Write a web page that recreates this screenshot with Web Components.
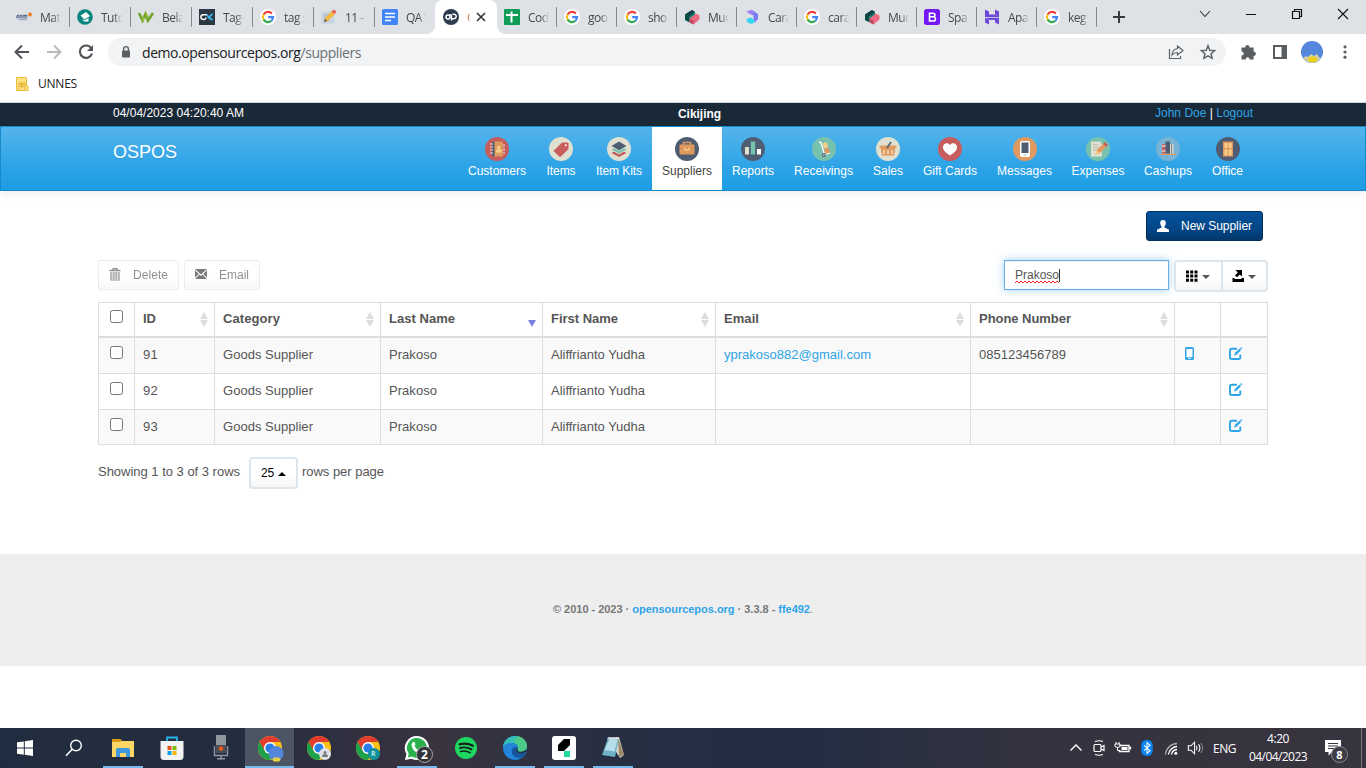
<!DOCTYPE html>
<html lang="en"><head><meta charset="utf-8"><title>OSPOS | Suppliers</title>
<style>
body{margin:0;width:1366px;height:768px;overflow:hidden;font-family:"Liberation Sans",Arial,sans-serif;background:#fff}
</style></head><body>
<pos-desktop></pos-desktop>
<script>
const google='<circle cx="8" cy="8" r="8" fill="#fff"/><g fill="none" stroke-width="2.2"><path d="M11.9 4.6A5.1 5.1 0 0 0 3.6 5.5" stroke="#ea4335"/><path d="M3.6 5.5A5.1 5.1 0 0 0 3.6 10.6" stroke="#fbbc05"/><path d="M3.6 10.6A5.1 5.1 0 0 0 11.4 11.8" stroke="#34a853"/><path d="M11.4 11.8A5 5 0 0 0 13.1 8.1H8.2" stroke="#4285f4"/></g>';
const mud='<path d="M1 5.500L8 1l3 2v5l-6 5-4-2z" fill="#0c8273"/><path d="M1 5.500l4 2V13l-4-2z" fill="#064c45"/><path d="M1 5.500L8 1l3 2-6 4.500z" fill="#123f43"/><path d="M5.500 9.500L12 4.500l3.500 2v4l-6 5-4-2z" fill="#ee6a82"/><path d="M5.500 9.500l4 2v4l-4-2z" fill="#b84d66"/>';
const chrome=extra=>'<circle cx="12" cy="12" r="12" fill="#fbc116"/><path d="M12 6h10.4a12 12 0 0 0-20.8 0L6.8 15z" fill="#e33b2e"/><path d="M1.6 6A12 12 0 0 0 12 24l5.2-9-5.2 3-5.2-3z" fill="#1fa04b"/><circle cx="12" cy="12" r="6" fill="#fff"/><circle cx="12" cy="12" r="4.6" fill="#2b7de9"/>'+extra;
const disc=(c,x)=>'<circle cx="12" cy="12" r="12" fill="'+c+'"/>'+x;
const ICONS={
 materi:[16,'<path d="M0 6h12v4H0z" fill="#56688c" opacity=".25"/><path d="M0 8h11M1 6.400h2m1 0h2m1 0h4" stroke="#40517c" stroke-width="1.100" opacity=".8"/><path d="M3 10.700h8" stroke="#8b9bb8"/><circle cx="14" cy="5.500" r="1.900" fill="#f47b20"/>'],
 tuto:[16,'<circle cx="8" cy="8" r="7.800" fill="#08857c"/><path d="M3.500 6.500L9 3l4 4-5.500 3.500z" fill="#fff"/><path d="M5 9.500l2.500 2 4-2.500v3.500H7z" fill="#fff"/>'],
 bela:[16,'<path d="M1 4l3.500 7.500 3-6.500 2.500 6.500L15 4" fill="none" stroke="#75a42a" stroke-width="2.700"/><path d="M8 4l2 4M4 12l2-4" stroke="#9cc63d" stroke-width="1.600"/>'],
 tagg:[16,'<path d="M0 0h16v16H0z" fill="#2b3844"/><path d="M8 5.800H4.200a2.300 2.300 0 0 0 0 4.600h1a1.700 1.700 0 0 0 1.700-1.900" fill="none" stroke="#fff" stroke-width="1.500"/><path d="M13.500 5L10 8.200l3.500 3M8 5.800l3 4.600" fill="none" stroke="#3ab4e8" stroke-width="1.700"/>'],
 google:[16,google],
 memo:[16,'<path d="M0 3l12-1 2 12-13 1z" fill="#c5d4df"/><path d="M3 6h7M3 8h6" stroke="#9fb1bf"/><path d="M3 13l1-4 7-7 3 3-7 7z" fill="#f3b83c"/><path d="M10.500 2.500L13 .5 15.500 3l-2 2z" fill="#e85e5e"/><path d="M3 13l1-3.500L6 12z" fill="#575149"/>'],
 doc:[16,'<rect width="16" height="16" rx="1.500" fill="#4285f4"/><path d="M3 4.500h10M3 8h10M3 11.500h6" stroke="#fff" stroke-width="1.700"/>'],
 op:[16,'<circle cx="8" cy="8" r="8" fill="#2c3c50"/><circle cx="5" cy="8" r="2" fill="none" stroke="#fff" stroke-width="1.500"/><path d="M6.500 6.200Q8.500 5 8.500 7v4.500M8.500 9.800h1.800c3.800 0 3.800-4.500.7-4.500H9.500" fill="none" stroke="#fff" stroke-width="1.400"/>'],
 sheet:[16,'<rect width="16" height="16" rx="1" fill="#0f9d58"/><path d="M2 6h12M7.500 2.500v11" stroke="#fff" stroke-width="2"/>'],
 mud:[16,mud],
 cara:[16,'<path d="M2.500 2.500L8 1l6 4v5l-3 3.500L9.500 10V6.500L6.500 5z" fill="#7c7df0"/><path d="M2.500 2.500L8 1l3 2-4.500 2.500z" fill="#a284f4"/><path d="M2.500 10l4-1.500 3 1.500 1.500 3.500-4 1.500-4-2z" fill="#36d5ee"/>'],
 boot:[16,'<rect width="16" height="16" rx="2.500" fill="#7516f5"/><path d="M5.500 4.200h3.300c2.900 0 2.900 3.600 0 3.600H5.500zM5.500 7.800h3.700c3 0 3 4.200-.1 4.200H5.500z" fill="none" stroke="#fff" stroke-width="1.600"/>'],
 host:[16,'<path d="M1 .5l4 2V5.500h5.500L15 8H1zM11 .5l4 2V8l-4-2.500zM15 15.500l-4-2V11H5.500L1 8.800h14zM1 9l4 2v4.500l-4-2z" fill="#6b48d8"/>'],
 back:[16,'<path d="M15 8H2M8 1.500L1.500 8 8 14.500" fill="none" stroke="#50545a" stroke-width="2"/>'],
 fwd:[16,'<path d="M1 8h13M8 1.500L14.500 8 8 14.500" fill="none" stroke="#b7b9bc" stroke-width="1.900"/>'],
 reload:[16,'<path d="M13.400 4.500A6.200 6.200 0 1 0 14 9.500" fill="none" stroke="#50545a" stroke-width="2.100"/><path d="M15 1v6H9z" fill="#50545a"/>'],
 lock:[12,'<rect x="2" y="4.500" width="8" height="7" rx="1" fill="#5a5e63"/><path d="M3.600 5V3a2.400 2.400 0 0 1 4.800 0v2" fill="none" stroke="#5a5e63" stroke-width="1.400"/>'],
 share:[16,'<path d="M1.500 5v9.500h11V12" fill="none" stroke="#5f6368" stroke-width="1.200"/><path d="M9.500 2l5.500 4.500L9.500 11V8.500C7 8.500 5.500 9 4 11c.3-3.500 2.500-6 5.500-6.500z" fill="none" stroke="#5f6368" stroke-width="1.200"/>'],
 star:[16,'<path d="M8 1.800l1.800 4.400 4.800.4-3.600 3.100 1.100 4.600L8 11.900l-4.100 2.400L5 9.700 1.400 6.600l4.800-.4z" fill="none" stroke="#5f6368" stroke-width="1.500"/>'],
 puzzle:[16,'<path d="M1.500 3.500h3.700c0-3.300 4.400-3.300 4.400 0h4v4c3 0 3 4.500 0 4.500v3.500h-4c0-3-3.900-3-3.900 0H1.500v-4c3 0 3-4 0-4z" fill="#5a5e63"/>'],
 panel:[16,'<path d="M1 1h14v14H1zM3 3v10h6.500V3z" fill="#5a5e63" fill-rule="evenodd"/>'],
 avatar:[22,'<circle cx="11" cy="11" r="11" fill="#5487dc"/><path d="M2 17l3-2 2 1 3-3 3 2 3-2 2 3 2 1a11 11 0 0 1-18 0z" fill="#d2cfa4"/><ellipse cx="11.500" cy="18.500" rx="4.500" ry="3" fill="#efd118"/>'],
 dots:[16,'<g fill="#5a5e63"><circle cx="8" cy="2.800" r="1.600"/><circle cx="8" cy="8" r="1.600"/><circle cx="8" cy="13.200" r="1.600"/></g>'],
 plus:[14,'<path d="M7 1v12M1 7h12" stroke="#36393d" stroke-width="2"/>'],
 x:[10,'<path d="M1 1l8 8M9 1L1 9" stroke="#333" stroke-width="1.600"/>'],
 wx:[12,'<path d="M1 1l10 10M11 1L1 11" stroke="#111" stroke-width="1.100"/>'],
 wmax:[12,'<path d="M1.500 3.500h7v7h-7zM3.500 3.500v-2h7v7h-2" fill="none" stroke="#111" stroke-width="1.200"/>'],
 wmin:[12,'<path d="M1 6.500h10" stroke="#111"/>'],
 wdown:[12,'<path d="M1 3l5 5.500L11 3" fill="none" stroke="#333" stroke-width="1.100"/>'],
 folder:[14,'<path d="M1.500.5h10v8.500h1.500v4.500H1.500z" fill="#ffe284" stroke="#e9bf39"/><path d="M4 13V6h6v7" fill="none" stroke="#e0b22f"/><path d="M5 7.500h4M5 9.500h4M7 6v5" stroke="#e0b22f"/>'],
 customers:[24,disc('#c75c5c','<rect x="7" y="4.500" width="11" height="15" rx="1.200" fill="#e0995e"/><path d="M7 4.500h2.500v15H7z" fill="#4f5d73"/><path d="M5 7h3M5 10h3M5 13h3M5 16h3" stroke="#e0e0d1" stroke-width="1.200"/><path d="M19 7v10" stroke="#e0e0d1" stroke-dasharray="3 1"/><circle cx="13.800" cy="10.500" r="1.700" fill="#f5cf87"/><path d="M11 15.500v-1.500q0-2 2.800-2t2.800 2v1.500z" fill="#f5cf87"/>')],
 items:[24,disc('#e0e0d1','<path d="M4.500 14L13 5.500h5.500l1 1V12L11 20.200z" fill="#c75c5c"/><circle cx="16.800" cy="8.200" r="1" fill="#fff"/>')],
 kits:[24,disc('#e0e0d1','<path d="M4.500 16L12 12l7.500 4-7.500 4z" fill="#c75c5c"/><path d="M4.500 13L12 9l7.500 4-7.500 4.500z" fill="#e0e0d1"/><path d="M4.500 12.500L12 9l7.500 3.500-7.500 4z" fill="#76c2af"/><path d="M4.500 10L12 6l7.500 4-7.500 4z" fill="#e0e0d1"/><path d="M4.500 9L12 4.500 19.500 9 12 13.300z" fill="#4f5d73"/>')],
 suppliers:[24,disc('#4f5d73','<path d="M8.500 8V5.500h7V8" fill="none" stroke="#e0995e" stroke-width="1.500"/><rect x="4.500" y="7.500" width="15" height="10" rx="1" fill="#e0995e"/><path d="M4.500 11.500h15" stroke="#c9854e" stroke-width=".8"/><path d="M9.500 10.500q0 2.500 2.500 2.500t2.500-2.500" fill="none" stroke="#f5cf87" stroke-width="1.400"/>')],
 reports:[24,disc('#4f5d73','<rect x="4" y="10" width="4" height="7.500" fill="#e0e0d1"/><rect x="9.800" y="4.500" width="4.400" height="13" fill="#76c2af"/><rect x="16" y="12" width="4" height="5.500" fill="#fff"/>')],
 receivings:[24,disc('#76c2af','<path d="M7 5l2 .5 3.500 12" fill="none" stroke="#fff" stroke-width="1.400"/><path d="M10.500 6.500l4-1.500 1.800 5-4 1.500z" fill="#f5cf87"/><path d="M11.800 12.200l4.700-1.500 1.700 4.800-4.500 1.500z" fill="#e0995e"/><path d="M12 18l6-2" stroke="#fff"/><circle cx="11.800" cy="18" r="1.900" fill="#4f5d73"/><circle cx="11.800" cy="18" r=".7" fill="#fff"/>')],
 sales:[24,disc('#e0e0d1','<path d="M3.500 8.500h17v2h-1l-1.500 8H6l-1.500-8h-1z" fill="#e0995e"/><path d="M8 13v4M12 13v4M16 13v4" stroke="#f4dfb8" stroke-width="1.600"/><path d="M11 11l4-6" stroke="#4f5d73" stroke-width="1.600"/>')],
 gift:[24,disc('#c75c5c','<path d="M12 18.500C7 15.500 5 13 5 10.300c0-4.300 5.300-5.300 7-2 1.700-3.300 7-2.300 7 2 0 2.700-2 5.200-7 8.200z" fill="#fff"/>')],
 messages:[24,disc('#e0995e','<rect x="7" y="4" width="10" height="16" rx="1.500" fill="#fff"/><path d="M8.500 5.500h7V16h-7z" fill="#4f5d73"/><path d="M10.500 18h3" stroke="#bbb"/>')],
 expenses:[24,disc('#76c2af','<path d="M5 4.500h10l1 3v12H5z" fill="#e0e0d1"/><path d="M7 8h6M7 10.500h5M7 13h3" stroke="#b9b9a9"/><path d="M9.500 17.500l1-4.500L17.500 6.500l3 3-7 7z" fill="#e0995e"/><path d="M17 7l2-2 3 3-2 2z" fill="#c75c5c"/><path d="M9.500 17.500l1-4.500 3.200 3z" fill="#f5cf87"/>')],
 cashups:[24,disc('#77b3d4','<path d="M5 16.500h14.500v1.500H5z" fill="#e0995e"/><path d="M6 7h3.500v9.500H6z" fill="#c75c5c"/><path d="M9.500 4.500H14v12H9.500z" fill="#4f5d73"/><path d="M14 7h3.500v9.500H14z" fill="#e0e0d1"/><path d="M6 9h3.500M6 14h3.500" stroke="#fff"/><path d="M15.700 7v9.500" stroke="#4f5d73" stroke-width=".8"/>')],
 office:[24,disc('#4f5d73','<rect x="7" y="4.500" width="10" height="15" fill="#e0995e"/><path d="M8.500 6h3v5h-3zm4.200 0h3v5h-3zm-4.200 6.500h3v6h-3zm4.200 0h3v6h-3z" fill="#f5cf87"/>')],
 user:[12,'<path d="M6 0c2 0 2.800 1.300 2.800 3 0 1.400-.6 2.600-1.300 3.300v1.200L12 9.800V12H0V9.800l4.500-2.300V6.300C3.800 5.600 3.200 4.400 3.200 3 3.200 1.300 4 0 6 0z" fill="#fff"/>'],
 trash:[12,'<path d="M.5 2.500h11M4 2V.7h4V2" fill="none" stroke="#555" stroke-width="1.300"/><path d="M2 4v8h8V4" fill="none" stroke="#555" stroke-width="1.200"/><path d="M4.200 4v7M6 4v7M7.800 4v7" stroke="#555"/>'],
 envelope:[12,'<path d="M0 1h12L6 6.500zM0 2.300L3.800 5.900 0 9.500zM12 2.300L8.200 5.900 12 9.500zM4.500 6.600L6 8 7.500 6.600 12 11H0z" fill="#333"/>'],
 th:[12,'<path d="M0 .5h3v3H0zm4.200 0h3v3h-3zm4.300 0h3v3h-3zM0 4.600h3v3H0zm4.200 0h3v3h-3zm4.300 0h3v3h-3zM0 8.700h3v3H0zm4.200 0h3v3h-3zm4.300 0h3v3h-3z" fill="#000"/>'],
 exp:[12,'<path d="M3.500 0H10v6.500L7.800 4.500 5 7.300 3 5.500 5.800 2.500zM.5 8h2v1h7V8H12v4H.5z" fill="#000"/>'],
 phone:[13,'<rect x="2" y="0" width="9" height="13" rx="1.600" fill="#2fa4e7"/><path d="M3.500 2h6v8.200h-6zM5 11.200h3v.9H5z" fill="#fff"/>'],
 edit:[13,'<path d="M8 1.700H2.800Q1 1.700 1 3.500v6.700Q1 12 2.800 12h6.700q1.800 0 1.800-1.800V7.500" fill="none" stroke="#2fa4e7" stroke-width="1.900"/><path d="M5 8.500l1-2.700L10.500 1.500l1.700 1.600L7.500 7.700z" fill="#2fa4e7"/><path d="M11 1l1.200-.9L13.300 1.200l-.9 1z" fill="#2fa4e7"/>'],
 win:[16,'<path d="M0 2.300l6.800-.9v6.200H0zM7.800 1.200L16 0v7.600H7.800zM0 8.500h6.800v6.200L0 13.800zM7.800 8.500H16V16l-8.200-1.200z" fill="#fff"/>'],
 search:[18,'<circle cx="11" cy="6.500" r="5.300" fill="none" stroke="#fff" stroke-width="1.400"/><path d="M7.200 10.300L1 16.700" stroke="#fff" stroke-width="1.600"/>'],
 explorer:[24,'<path d="M1 3h8l2 2h12v16H1z" fill="#ffd766"/><path d="M1 3h9v3H1z" fill="#d89b12"/><path d="M5 21v-7q0-2 2-2h10q2 0 2 2v7h-4v-4H9v4z" fill="#3e97e0"/>'],
 store:[24,'<path d="M7 7V1.500h10V7" fill="none" stroke="#27b2ea" stroke-width="1.800"/><path d="M.5 5h23v15.500q0 3.500-3.500 3.500H4Q.5 24 .5 20.500z" fill="#f3f3f3"/><path d="M7.500 10h4v4h-4z" fill="#e8501f"/><path d="M12.500 10h4v4h-4z" fill="#7cb90a"/><path d="M7.500 15h4v4h-4z" fill="#0aa0e6"/><path d="M12.500 15h4v4h-4z" fill="#f5b60a"/>'],
 mic:[24,'<rect x="7" y="-1" width="10" height="18" fill="#8f979e"/><path d="M7 9h10v8H7z" fill="#4b4e52"/><circle cx="12" cy="12.500" r="2.200" fill="#f05a1a"/><path d="M5.500 10v9.500h13V10M12 19.500V23M8 22.800h8" fill="none" stroke="#8f979e" stroke-width="1.400"/>'],
 chromeA:[24,chrome('<circle cx="18" cy="17.500" r="7.500" fill="#5487dc"/><ellipse cx="18.500" cy="23.500" rx="4" ry="2.200" fill="#e4cf45"/>')],
 chromeB:[24,chrome('<circle cx="18" cy="18" r="6" fill="#dfe3e7"/><circle cx="18" cy="16.500" r="1.500" fill="#737a80"/><path d="M15 21q0-3 3-3t3 3z" fill="#737a80"/>')],
 chromeC:[24,chrome('<circle cx="18" cy="18" r="6" fill="#10909b"/>')],
 whatsapp:[24,'<path d="M12 0a12 12 0 0 1 0 24q-3 0-5.500-1.300L0 24l1.400-6A12 12 0 0 1 12 0z" fill="#fff"/><path d="M12 2a10 10 0 0 1 0 20q-3 0-5.200-1.400L2.800 21.500l1-3.800A10 10 0 0 1 12 2z" fill="#29b14c"/><path d="M7.500 6.500q1.500-1.500 2.300.3l.7 1.700-1 1.500q1.500 3 4.500 4.200l1.200-1.500 2.700 1.300q.3 3-3 3.300Q7.500 16 6.500 9q0-1.500 1-2.500z" fill="#fff"/>'],
 spotify:[24,'<circle cx="12" cy="12" r="11" fill="#1ed760"/><g fill="none" stroke="#17241d" stroke-linecap="round"><path d="M5.500 8.300q7-2 13.500 1.500" stroke-width="2.200"/><path d="M6 12q6-1.700 11.500 1.400" stroke-width="1.900"/><path d="M6.500 15.500q5-1.300 9.700 1.200" stroke-width="1.600"/></g>'],
 edge:[24,'<circle cx="12" cy="12" r="12" fill="#1571c9"/><path d="M0 12C0 5 5.500 0 12 0s12 4.500 12 10c0 4-3 6-6 6-4 0-5-1.500-3.500-3C16 10 13 7 9 7 4 7 0 10 0 12z" fill="#35c1b8"/><path d="M14 0c6 1 10 5 10 10 0 4-3 6-6 6-4 0-5-1.500-3.500-3 2-3-.5-6-4-6z" fill="#58cf70" opacity=".65"/><path d="M.2 12C1 8 5 6.500 9 7c3 .5 5 2 5.500 4-1.500-1.500-6-1-6 3.500 0 4 3.500 8 8.500 8A12 12 0 0 1 .2 12z" fill="#2386db"/><path d="M14.500 13q-2 3 3.500 3 3 0 5-2l-1.500 5q-3 3-7.500 2.500-5-1-5-5.500 0-4 4.500-5 1.500.5 1 2z" fill="#17569c"/><path d="M14.500 13q-2 3.500 3.500 3.500 3 0 5.600-2.500" fill="none" stroke="#252c3e" stroke-width="1.400"/>'],
 pen:[24,'<rect width="24" height="24" rx="3" fill="#fff"/><path d="M6 15V9l6-6h6v6l-6 6z" fill="#000"/><path d="M12 15h6v6h-6z" fill="#1fdb9c"/>'],
 notepad:[24,'<path d="M6 2l12-1 5 18-4 3z" fill="#d9d7d0"/><path d="M17 1l6 18-5 2z" fill="#9b8a69"/><path d="M7 2l11 0-4 19-13-2z" fill="#6fb2c8"/><path d="M8.500 3l8 .5-3 12-10-1.500z" fill="#b5dfe9"/><path d="M7 2l11 .5" stroke="#e6e6e6" stroke-width="1.600"/>'],
 up:[14,'<path d="M1.500 9.500L7 4l5.500 5.500" fill="none" stroke="#fff" stroke-width="1.400"/>'],
 meet:[16,'<rect x="3" y="4.500" width="7" height="7" rx="1" fill="none" stroke="#fff" stroke-width="1.200"/><path d="M10 7l3-1.500v5L10 9" fill="none" stroke="#fff" stroke-width="1.200"/><path d="M4 1.500q4-1.500 8 0M4 14.500q4 1.500 8 0" fill="none" stroke="#fff" stroke-width="1.200"/>'],
 battery:[16,'<path d="M4.500 5.500H14v6H4.500V10M14.500 7.500h1v2" fill="none" stroke="#fff" stroke-width="1.300"/><path d="M6.500 7h6v3h-6z" fill="#fff"/><path d="M0 4h5v2.500q-2.500 2-5 0zM1 2v2M4 2v2M2.500 7v3.500h2" stroke="#fff" fill="none"/>'],
 bt:[16,'<rect x="2.300" y="0" width="11.400" height="16" rx="5" fill="#0a84f2"/><path d="M5 5.300l6 5.400-3 2.600V2.700l3 2.600-6 5.400" fill="none" stroke="#fff" stroke-width="1.100"/>'],
 wifi:[16,'<g fill="none" stroke="#fff" stroke-width="1.300"><path d="M2.500 14.500A12 12 0 0 1 14 3.500" opacity=".6"/><path d="M5.500 14.500A9 9 0 0 1 14 6.500"/><path d="M8.500 14.500A6 6 0 0 1 14 9.500"/></g><circle cx="12.800" cy="13.300" r="1.500" fill="#fff"/>'],
 sound:[18,'<path d="M1.500 6.500h3l4-4v13l-4-4h-3z" fill="none" stroke="#fff" stroke-width="1.200"/><path d="M10.500 6.500q1.700 2.500 0 5M13 4.800q3 4.200 0 8.400" fill="none" stroke="#fff" stroke-width="1.200"/><path d="M15.500 3.300q4 5.700 0 11.400" fill="none" stroke="#fff" opacity=".45"/>'],
 notif:[18,'<path d="M1 1h16v12H8l-3.500 3.500V13H1z" fill="#fff"/><path d="M4 4.500h10M4 7h10M4 9.500h7" stroke="#35333f" stroke-width="1.100"/>']
};
const T=(s,w)=>`<fit-text w="${w}">${s}</fit-text>`;
const I=(n,s)=>`<ui-icon name="${n}" size="${s||''}"></ui-icon>`;
const SEG='font-family:"Open Sans","Noto Sans",sans-serif;';
function define(name,view){
  customElements.define(name,class extends HTMLElement{
    connectedCallback(){
      if(this.shadowRoot)return;
      this.attachShadow({mode:'open'}).innerHTML=view(n=>this.getAttribute(n)||'',this);
    }
  });
}
define('pos-desktop',()=>`<style>:host{display:flex;flex-direction:column;width:1366px;height:768px;overflow:hidden}</style>
<browser-tabs></browser-tabs><browser-toolbar></browser-toolbar><pos-page></pos-page><task-bar></task-bar>`);

const tabs=[['materi','Mat'],['tuto','Tuto'],['bela','Bela'],['tagg','Tag-'],['google','tag s'],['memo','11 - '],['doc','QA V'],['op','O'],['sheet','Cod'],['google','goo'],['google','sho'],['mud','Muc'],['cara','Cara'],['google','cara'],['mud','Muc'],['boot','Spa'],['host','Apa'],['google','keg']];
define('browser-tabs',()=>`<style>:host{display:flex;height:34px;background:#dee1e6;padding-left:8px;box-sizing:border-box;flex:none}
.plus{display:flex;align-items:center;padding-left:15px;flex:1}.win{display:flex;align-items:center;height:28px;gap:34px;padding-right:17px}</style>
${tabs.map((t,i)=>`<browser-tab icon="${t[0]}" w="${i<7?61:i==7?62:60}" ${i<7?'wide':''} ${i==7?'active':''} ${i==6?'last':''}>${t[1]}</browser-tab>`).join('')}
<div class="plus">${I('plus',14)}</div><div class="win">${I('wdown',12)+I('wmin',12)+I('wmax',12)+I('wx',12)}</div>`);
define('browser-tab',a=>`<style>:host{display:flex;align-items:center;position:relative;width:${a('w')}px;box-sizing:border-box;padding-left:7px;height:34px;flex:none;${SEG}font-size:12px;color:#45494d}
:host([wide]),:host([active]){padding-left:8px}
.t{margin-left:8px;width:21px;overflow:hidden;white-space:nowrap;letter-spacing:-.5px;-webkit-mask-image:linear-gradient(90deg,#000 60%,transparent)}
:host::after{content:"";position:absolute;right:0;top:7px;height:20px;width:1px;background:#85888c}
:host([wide])::after{right:-1px}
:host([last])::after,:host([active])::after{display:none}
:host([active]){background:#fff;border-radius:8px 8px 0 0}
:host([active])::before{content:"";position:absolute;left:-8px;right:-8px;bottom:0;height:8px;background:radial-gradient(circle at 0 0,transparent 7.500px,#fff 8px) left/8px 8px no-repeat,radial-gradient(circle at 100% 0,transparent 7.500px,#fff 8px) right/8px 8px no-repeat}
:host([active]) .t{width:3px;color:#c77a4a}.c{margin-left:6px;display:flex}</style>
${I(a('icon'),16)}<div class="t"><slot></slot></div>${a('icon')=='op'?`<div class="c">${I('x',10)}</div>`:''}`);

define('browser-toolbar',()=>`<style>:host{display:block;height:69px;background:#fff;flex:none;${SEG}color:#202124;border-bottom:1px solid #d4d8dc;box-sizing:border-box}
.r{display:flex;height:36px;align-items:center;padding-left:14px}.n{display:flex;gap:16px;width:94px;flex:none}
.o{display:flex;align-items:center;width:1118px;flex:none;height:28px;border-radius:14px;background:#f1f3f4;box-sizing:border-box;padding:0 10px 0 12px;font-size:14px}
.u{margin-left:10px;flex:1}.u i{font-style:normal;color:#6b6f74}.s{display:flex;gap:16px}.e{display:flex;align-items:center;gap:16px;padding-left:14px;flex:none}
.e ui-icon:nth-child(3){margin-left:-3px}.e ui-icon:last-child{margin-left:-2px}
.b{display:flex;align-items:center;height:27px;padding-left:15px;gap:9px;font-size:12px}</style>
<div class="r"><div class="n">${I('back')+I('fwd')+I('reload')}</div><div class="o">${I('lock',12)}<div class="u">${T('demo.opensourcepos.org<i>/suppliers</i>',219)}</div><div class="s">${I('share')+I('star')}</div></div>
<div class="e">${I('puzzle')+I('panel')}${I('avatar',22)}${I('dots')}</div></div>
<div class="b">${I('folder',14)}${T('UNNES',39)}</div>`);

define('pos-page',()=>`<style>:host{display:flex;flex-direction:column;height:625px;flex:none;background:#fff}</style>
<pos-topbar></pos-topbar><pos-navbar></pos-navbar><supplier-manager></supplier-manager><pos-footer></pos-footer>`);
define('pos-topbar',()=>`<style>:host{display:grid;grid-template-columns:1fr 60px 1fr;height:23px;flex:none;background:#1a2937;color:#fff;font-size:12px;padding:0 113px 0 146px;line-height:20px}
.d{margin-left:-33px}.c{text-align:center;font-weight:bold;line-height:22px}.r{text-align:right}.r b{font-weight:normal;color:#2fa4e7}</style>
<div class="d">${T('04/04/2023 04:20:40 AM',131)}</div><div class="c">${T('Cikijing',43)}</div><div class="r">${T('<b>John Doe</b> | <b>Logout</b>',98)}</div>`);
const nav=[['customers','Customers',58,78],['items','Items',29,50],['kits','Item Kits',46,66],['suppliers','Suppliers',50,70],['reports','Reports',42,62],['receivings','Receivings',59,79],['sales','Sales',30,50],['gift','Gift Cards',54,74],['messages','Messages',55,75],['expenses','Expenses',53,72],['cashups','Cashups',48,68],['office','Office',31,51]];
define('pos-navbar',()=>`<style>:host{display:flex;height:65px;box-sizing:border-box;flex:none;border:1px solid #178acc;background:linear-gradient(#54b4eb,#2fa4e7 60%,#1d9ce5);box-shadow:0 1px 10px rgba(0,0,0,.1);padding:0 112px;justify-content:space-between;color:#fff;z-index:1}
.l{font-size:18px;line-height:50px;text-shadow:0 1px 0 rgba(0,0,0,.1)}nav{display:flex}</style>
<div class="l">${T('OSPOS',64)}</div><nav>${nav.map(n=>`<nav-item icon="${n[0]}" w="${n[3]}" tw="${n[2]}" ${n[0]=='suppliers'?'active':''}>${n[1]}</nav-item>`).join('')}</nav>`);
define('nav-item',(a,e)=>`<style>:host{display:flex;flex-direction:column;align-items:center;width:${a('w')}px;height:63px;padding-top:10px;box-sizing:border-box;font-size:12px;color:#fff}
:host([active]){background:#fff;color:#444}div{line-height:18px;margin-top:1px}</style>${I(a('icon'),24)}<div>${T(e.textContent,a('tw'))}</div>`);

define('ui-button',(a,e)=>`<style>:host{display:flex;align-items:center;box-sizing:border-box;height:30px;width:${a('w')}px;padding-left:10px;border:1px solid rgba(0,0,0,.1);border-radius:3px;font-size:12px;color:#555;background:linear-gradient(#fff,#fff 60%,#f5f5f5)}
:host([disabled]){opacity:.65}:host([primary]){background:linear-gradient(#04519b,#044687 60%,#033769);border-color:#022f5a;color:#fff}
div{margin-left:12px}ui-icon{margin-bottom:2px}:host([primary]) ui-icon{margin-bottom:1px}</style>${I(a('icon'),12)}<div>${T(e.textContent,a('tw'))}</div>`);
define('caret-button',(a)=>`<style>:host{display:flex;align-items:center;justify-content:center;gap:4px;box-sizing:border-box;height:32px;width:${a('w')}px;border:2px solid #dde5ed;border-radius:4px;font-size:12px;color:#000;background:linear-gradient(#fff,#fff 60%,#f5f5f5)}
:host([first]),:host([end]){padding-right:2px}
:host([first]){border-radius:4px 0 0 4px}:host([end]){border-radius:0 4px 4px 0;margin-left:-2px}
i{border:4px solid transparent;border-top-color:#555;border-bottom:0;margin-top:1px}:host([up]) i{border-top:0;border-bottom:4px solid #000}</style><slot></slot><i></i>`);
define('search-box',()=>`<style>:host{display:flex;align-items:center;box-sizing:border-box;width:165px;height:30px;border:1px solid #66afe9;background:#fff;box-shadow:inset 0 1px 1px rgba(0,0,0,.075),0 0 8px rgba(102,175,233,.6);padding-left:10px;font-size:12px;color:#555}
.q{position:relative;display:flex;border-right:1px solid #333;line-height:13px;height:13px}svg{position:absolute;left:0;top:11px}</style>
<div class="q">${T('Prakoso',44)}<svg width="45" height="4"><path d="M0 3${Array.from({length:22},(_,i)=>`L${i*2+2} ${i%2?3:1}`).join('')}" fill="none" stroke="#f22" stroke-width="1"/></svg></div>`);

define('supplier-manager',()=>`<style>:host{display:block;height:363px;flex:none;padding:20px 98px 0;box-sizing:border-box;color:#555;font-size:13px}
.a{display:flex;justify-content:flex-end;padding-right:5px;height:49px}.b{display:flex;gap:5px;height:42px}.s{flex:1}.p{display:flex;align-items:center;height:32px;margin-top:12px}.tx{margin-top:-3px}.m{margin:0 4px 0 9px;display:flex}.g{display:flex}</style>
<div class="a"><ui-button primary icon="user" w="117" tw="71">New Supplier</ui-button></div>
<div class="b"><ui-button disabled icon="trash" w="81" tw="35">Delete</ui-button><ui-button disabled icon="envelope" w="76" tw="30">Email</ui-button><div class="s"></div><search-box></search-box><div class="g"><caret-button first w="49">${I('th',12)}</caret-button><caret-button end w="47">${I('exp',12)}</caret-button></div></div>
<data-table></data-table>
<div class="p"><div class="tx">${T('Showing 1 to 3 of 3 rows',142)}</div><div class="m"><caret-button up w="49">${T('25',13)}</caret-button></div><div class="tx">${T('rows per page',82)}</div></div>`);

const row=(id,mail,ph)=>[['box'],[id,15],['Goods Supplier',90],['Prakoso',48],['Aliffrianto Yudha',94],mail?[mail,147,'link']:[''],ph?[ph,87]:[''],ph?['phone',0,'ico']:[''],['edit',0,'ico']];
const rows=[row('91','yprakoso882@gmail.com','085123456789'),row('92'),row('93')];
define('data-table',()=>`<style>:host{display:block;width:1170px;box-sizing:border-box;border:1px solid #ddd;border-bottom:0}
.row{display:grid;grid-template-columns:35px 80px 166px 162px 173px 255px 204px 46px 47px;height:36px;box-sizing:border-box;border-bottom:1px solid #ddd}
.row.odd{background:#f9f9f9}.row.h{height:35px;border-bottom-width:2px;font-weight:bold}.row:last-child{height:35px}
.row>div{border-left:1px solid #ddd;padding:0 0 2px 8px;display:flex;align-items:center;box-sizing:border-box;position:relative}.row>div:first-child{border:0;padding-left:11px;padding-bottom:6px}
.row.h>div{padding:0 0 3px 8px}.row.h>div:first-child{padding:0 0 6px 11px}.row>.ico{padding-bottom:4px}
.link{color:#2fa4e7}input{margin:0;width:13px;height:13px}
.sort{position:absolute;right:6px;top:9px;display:flex;flex-direction:column;gap:1px}.sort i{border:4px solid transparent;border-bottom:7px solid #ddd;border-top:0}.sort i+i{border-top:7px solid #ddd;border-bottom:0}.sort.d i:first-child{visibility:hidden}.sort.d i+i{border-top-color:#7a80e0}</style>
<div class="row h"><div><input type="checkbox"></div>${[['ID',13],['Category',57],['Last Name',66],['First Name',67],['Email',35],['Phone Number',92]].map((h,i)=>`<div>${T(...h)}<span class="sort ${i==2?'d':''}"><i></i><i></i></span></div>`).join('')}<div></div><div></div></div>
${rows.map((r,i)=>`<div class="row ${i%2?'':'odd'}">${r.map(c=>c[0]=='box'?'<div><input type="checkbox"></div>':c[2]=='ico'?`<div class="ico">${I(c[0],13)}</div>`:`<div class="${c[2]||''}">${c[0]?T(c[0],c[1]):''}</div>`).join('')}</div>`).join('')}`);

define('pos-footer',()=>`<style>:host{display:block;height:112px;background:#eee;flex:none;text-align:center;line-height:110px;font-size:11px;font-weight:bold;color:#777}b{color:#2fa4e7}.n{font-weight:normal}</style>
${T('© 2010 - 2023 · <b>opensourcepos.org</b> · 3.3.8 - <b>ffe492</b><span class="n">.</span>',260)}`);

const tasks=[['explorer','run'],['store',''],['mic',''],['chromeA','active'],['chromeB',''],['chromeC',''],['whatsapp','run'],['spotify',''],['edge','run'],['pen','run'],['notepad','run']];
define('task-bar',()=>`<style>:host{display:flex;height:40px;flex:none;margin-top:0;background:linear-gradient(90deg,#202c3f 0,#252d40 250px,#35313f 390px,#393440 440px,#262e42 620px,#222d42 800px,#35333f 1050px,#37333f);color:#fff;${SEG}font-size:12px}
.c{display:flex;align-items:center;justify-content:center}.tray{margin-left:auto;display:flex;align-items:center}
.clock{width:58px;text-align:center;line-height:18px;margin-left:13px;padding-top:1px;height:37px}.tray>ui-icon{margin-right:8px}.tray>ui-icon[name=sound]{margin-right:10px}.not{position:relative;margin-left:17px;width:37px;display:flex}
.badge{position:absolute;left:7px;top:7px;width:15px;height:15px;border:1px solid #8b8990;border-radius:50%;background:#3e3b44;font:bold 11px/15px "Open Sans",sans-serif;text-align:center}
.end{width:4px;height:40px;border-left:1px solid #74717a}</style>
<div class="c" style="width:49px">${I('win',16)}</div><div class="c" style="width:49px">${I('search',18)}</div>${tasks.map(t=>`<task-item icon="${t[0]}" state="${t[1]}"></task-item>`).join('')}
<div class="tray">${I('up',14)}${I('meet')+I('battery')+I('bt')+I('wifi')+I('sound',16)}${T('ENG',23)}<div class="clock"><div>${T('4:20',22)}</div><div>${T('04/04/2023',58)}</div></div><div class="not">${I('notif',18)}<span class="badge">8</span></div></div><div class="end"></div>`);
define('task-item',a=>{const s=a('state'),n=a('icon');return `<style>:host{display:flex;align-items:center;justify-content:center;width:49px;height:40px;box-sizing:border-box;position:relative}
.u{position:absolute;bottom:0;height:2px;left:${s=='active'?0:5}px;right:${s=='active'?0:4}px;background:#76b9ed}
.bg{position:absolute;font:bold 10px "Open Sans",sans-serif;color:#fff}
.w{left:24px;top:18px;width:15px;height:15px;border:1px solid #aaa;border-radius:50%;background:#34343b;font-size:12px;line-height:15px;text-align:center}.r{left:28px;top:21px;font-size:7px;color:#b8e4e6}
${s=='active'?':host{background:#4c5564}':''}</style>${I(n,24)}${s?'<div class="u"></div>':''}${n=='whatsapp'?'<span class="bg w">2</span>':n=='chromeC'?'<span class="bg r">R</span>':''}`});
define('ui-icon',a=>{const d=ICONS[a('name')],s=a('size')||16;return `<style>:host{display:inline-flex;flex:none;width:${s}px;height:${s}px}svg{overflow:visible}</style><svg width="${s}" height="${s}" viewBox="0 0 ${d[0]} ${d[0]}">${d[1]}</svg>`});
/* Spreads its letters so that the slotted text takes the width given by "w". */
customElements.define('fit-text',class extends HTMLElement{
  connectedCallback(){
    if(!this.shadowRoot)this.attachShadow({mode:'open'}).innerHTML='<style>:host{display:inline-block;white-space:nowrap}</style><slot></slot>';
    this.style.letterSpacing='0';
    const natural=this.getBoundingClientRect().width;
    this.style.letterSpacing=((+this.getAttribute('w')-natural)/this.textContent.length).toFixed(3)+'px';
  }
});
</script></body></html>
